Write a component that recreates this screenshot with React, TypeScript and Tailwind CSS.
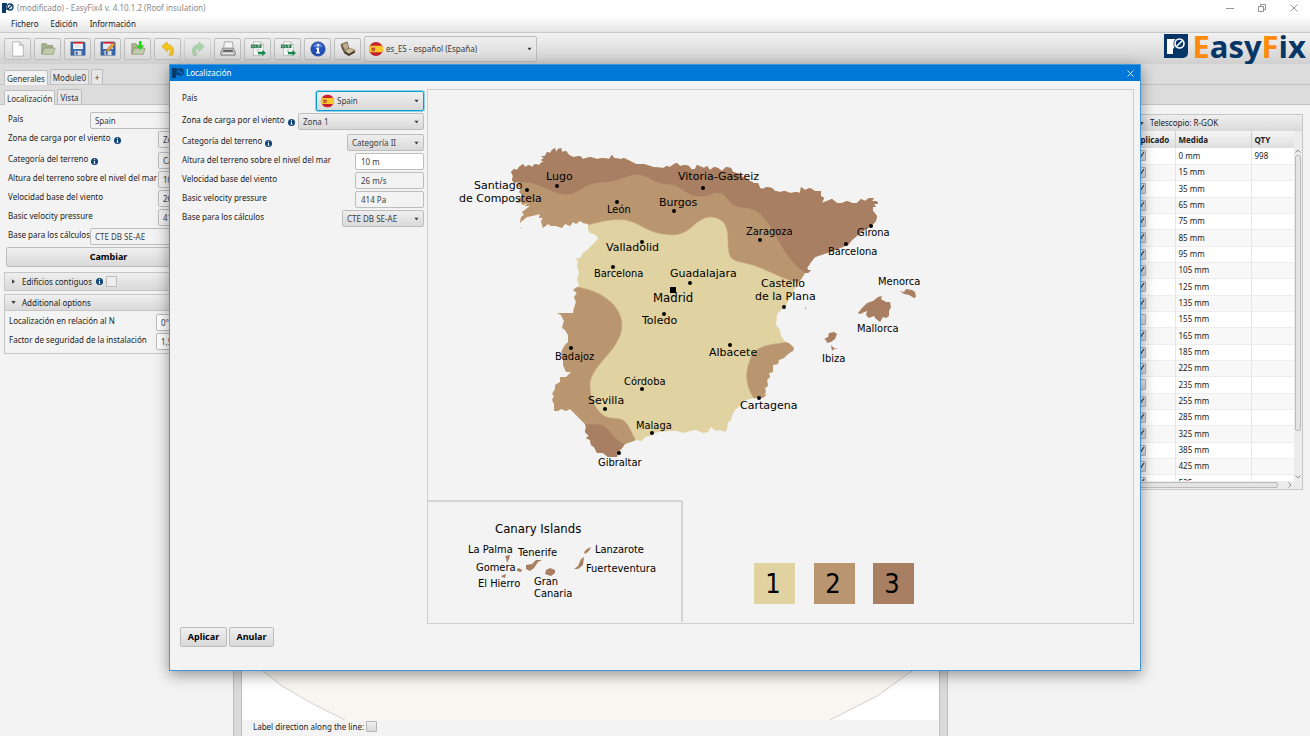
import type { ReactNode } from "react";
import clsx from "clsx";

const control = "rounded-[2px] border border-[#bdbdbd] text-[8px] text-[#3c3c3c]";
const raised = "bg-linear-to-b from-[#efefef] to-[#d9d9d9]";

const coast =
  "M511 172L514 169 517 170 519 167 523 164 525 167 529 165 532 167 535 164 539 165 542 162 545 163 541 160 544 158 541 156 545 156 547 152 550 153 552 150 555 148 556 152 558 149 561 148 562 152 566 151 569 155 573 157 580 156 583 159 590 157 597 159 603 158 609 159 612 155 614 158 621 159 624 158 630 161 636 164 644 164 653 167 663 168 667 166 670 167 674 164 677 163 680 166 685 165 689 166 691 169 695 169 697 165 704 168 707 166 710 170 714 167 718 168 722 171 726 167 731 168 733 172 740 174 743 177 750 181 754 183 758 183 760 188 762 189 767 187 772 188 775 191 780 192 785 191 790 193 797 192 800 193 801 187 805 190 810 188 815 191 821 191 821 196 824 198 822 203 827 201 832 199 837 203 842 203 847 201 852 203 857 203 861 199 865 201 869 198 874 198 872 201 877 201 878 204 874 204 876 207 873 207 873 211 877 216 876 221 871 226 865 230 858 235 852 240 848 245 840 248 833 251 824 254 815 257 811 262 807 268 808 270 811 270 808 273 805 273 802 278 797 285 791 297 785 307 779 312 777 315 776 325 780 330 781 336 785 341 790 344 794 348 793 351 788 354 784 358 779 360 778 364 773 365 773 372 769 373 770 377 767 380 768 386 765 388 766 392 764 395 767 394 763 398 756 398 750 399 744 401 740 406 735 410 732 416 731 421 728 422 727 429 725 432 720 430 716 431 711 427 708 432 703 433 696 430 690 431 683 433 677 431 669 431 660 432 653 433 650 436 645 437 642 441 636 440 631 442 625 444 622 448 618 452 617 457 608 457 603 453 597 453 594 447 591 445 590 440 586 438 589 436 585 432 586 427 585 424 576 415 570 409 566 411 561 409 558 411 554 411 554 404 552 400 554 396 552 394 555 389 555 385 560 382 560 377 566 377 569 374 571 372 566 372 563 365 563 360 561 356 562 350 565 345 568 342 568 335 565 330 562 328 564 321 561 315 557 313 566 313 573 313 574 308 576 302 574 297 577 293 573 290 577 287 579 286 577 279 579 273 577 266 578 262 576 259 581 257 582 254 587 250 592 245 598 239 596 235 590 233 588 230 588 224 583 223 580 221 576 224 573 222 570 226 565 224 562 228 556 226 551 226 548 224 543 228 541 221 543 218 539 218 540 214 536 215 532 216 527 217 522 221 520 223 521 217 524 215 522 212 530 206 524 206 529 203 522 205 521 202 517 203 519 198 523 196 519 192 521 188 517 186 519 182 514 183 512 180 513 176Z";

type CityLabel = { name: string; x: number; y: number; wide?: boolean; dot?: [number, number] };

const cities: CityLabel[] = [
  { name: "Lugo", x: 546, y: 180, wide: true, dot: [557, 186] },
  { name: "Santiago", x: 474, y: 189, wide: true, dot: [527, 190] },
  { name: "de Compostela", x: 459, y: 202, wide: true },
  { name: "León", x: 607, y: 213, dot: [617, 202] },
  { name: "Burgos", x: 659, y: 206, wide: true, dot: [674, 211] },
  { name: "Vitoria-Gasteiz", x: 678, y: 180, wide: true, dot: [703, 188] },
  { name: "Zaragoza", x: 746, y: 235, dot: [760, 240] },
  { name: "Girona", x: 857, y: 236, dot: [871, 226] },
  { name: "Barcelona", x: 828, y: 255, dot: [846, 244] },
  { name: "Valladolid", x: 606, y: 251, wide: true, dot: [642, 242] },
  { name: "Barcelona", x: 594, y: 277, dot: [613, 267] },
  { name: "Guadalajara", x: 670, y: 277, wide: true, dot: [690, 283] },
  { name: "Castello", x: 761, y: 287, wide: true, dot: [784, 307] },
  { name: "de la Plana", x: 755, y: 300, wide: true },
  { name: "Menorca", x: 878, y: 285 },
  { name: "Mallorca", x: 857, y: 332 },
  { name: "Ibiza", x: 822, y: 362 },
  { name: "Toledo", x: 642, y: 324, wide: true, dot: [664, 314] },
  { name: "Albacete", x: 709, y: 356, wide: true, dot: [730, 345] },
  { name: "Badajoz", x: 555, y: 360, dot: [571, 348] },
  { name: "Córdoba", x: 624, y: 385, dot: [642, 389] },
  { name: "Sevilla", x: 588, y: 404, wide: true, dot: [605, 409] },
  { name: "Cartagena", x: 740, y: 409, wide: true, dot: [759, 398] },
  { name: "Malaga", x: 636, y: 429, dot: [652, 433] },
  { name: "Gibraltar", x: 598, y: 466, dot: [619, 453] },
  { name: "La Palma", x: 468, y: 553 },
  { name: "Tenerife", x: 518, y: 556 },
  { name: "Gomera", x: 476, y: 571 },
  { name: "El Hierro", x: 478, y: 587 },
  { name: "Gran", x: 534, y: 585 },
  { name: "Canaria", x: 534, y: 597 },
  { name: "Lanzarote", x: 595, y: 553 },
  { name: "Fuerteventura", x: 586, y: 572 },
];

const legend = [
  { zone: "1", x: 754, fill: "#e1d2a1" },
  { zone: "2", x: 814, fill: "#ba9670" },
  { zone: "3", x: 873, fill: "#a87f62" },
];

const sizes = [0, 15, 35, 65, 75, 85, 95, 105, 125, 135, 155, 165, 185, 225, 235, 255, 285, 325, 385, 425, 525];
const notApplied = [155, 235];

function BrandMark({ className }: { className?: string }) {
  return (
    <svg viewBox="0 0 12 10" className={className} aria-hidden="true">
      <path d="M0 0h5v1.600a4 4 0 0 0 0 4.800L4 7v3H0z" fill="#0b3a69" />
      <circle cx="8" cy="4" r="3" fill="none" stroke="#0b3a69" strokeWidth="1.300" />
      <path d="M6 6l4-4" stroke="#0b3a69" strokeWidth="1.200" />
    </svg>
  );
}

function SpanishFlag({ className }: { className?: string }) {
  return (
    <svg viewBox="0 0 14 14" className={className} aria-hidden="true">
      <circle cx="7" cy="7" r="7" fill="#c8202f" />
      <path d="M.9 3.700h12.200a7 7 0 0 1 0 6.600H.9a7 7 0 0 1 0-6.600z" fill="#ffc928" />
      <path d="M2.500 5.500h3.600v2.200a1.800 1.800 0 0 1-3.600 0z" fill="#b8442f" />
      <path d="M3.300 4.800h2v1h-2zM4 7h1v1.500H4z" fill="#e9a27c" />
    </svg>
  );
}

function InfoDot({ className }: { className?: string }) {
  return (
    <svg viewBox="0 0 8 8" className={clsx("size-[7px] shrink-0", className)} aria-hidden="true">
      <circle cx="4" cy="4" r="4" fill="#0e427a" />
      <path d="M3.400 1.200h1.200v1H3.400zM3 3h1.600v2.800H5v.7H3v-.7h.4V3.700H3z" fill="#fff" />
    </svg>
  );
}

function Arrow({ className }: { className?: string }) {
  return (
    <svg viewBox="0 0 6 4" className={clsx("h-[3px] w-[5px]", className)} aria-hidden="true">
      <path d="M0 0h6L3 4z" fill="#3f3f3f" />
    </svg>
  );
}

function Combo({ id, value, className, flag, focused }: { id: string; value: string; className: string; flag?: boolean; focused?: boolean }) {
  return (
    <div className={clsx("relative", className)}>
      <select
        id={id}
        className={clsx(
          "block size-full appearance-none rounded-[2px] border text-[8px] text-[#3c3c3c]",
          raised,
          flag ? "pl-[20px]" : "pl-1",
          focused ? "border-[#039ed3] ring-1 ring-[#039ed3]/40" : "border-[#bdbdbd]",
        )}
      >
        <option>{value}</option>
      </select>
      {flag && <SpanishFlag className="pointer-events-none absolute top-1/2 left-[5px] size-[13px] -translate-y-1/2" />}
      <Arrow className="pointer-events-none absolute top-1/2 right-[5px] -translate-y-1/2" />
    </div>
  );
}

function Row({ id, label, info, className, children }: { id: string; label: string; info?: boolean; className?: string; children: ReactNode }) {
  return (
    <div className={clsx("flex items-start", className)}>
      <label htmlFor={id} className="text-[8px] leading-[14px] whitespace-nowrap">
        {label}
      </label>
      {info && <InfoDot className="mt-1.5 ml-[3px]" />}
      <div className="ml-auto">{children}</div>
    </div>
  );
}

const floppy = (
  <>
    <path d="M1 1h15l1 1v14H1z" fill="#3868a8" stroke="#264b80" strokeWidth=".6" />
    <path d="M3.500 1h11v8h-11z" fill="#f6f8fb" />
    <path d="M3.500 1h11v2h-11z" fill="#d9232b" />
    <path d="M5 5h8M5 7h8" stroke="#c3ccd8" strokeWidth=".7" />
    <path d="M5 11h8v5H5z" fill="#d7dbe0" />
    <path d="M6.500 12h2v3.500h-2z" fill="#2f558a" />
  </>
);

const folder = (
  <>
    <path d="M2 3h5l1 2h6v3H5L2 14z" fill="#a8b48c" stroke="#84906a" strokeWidth=".8" />
    <path d="M5 8h12l-2 7H2z" fill="#c3cbae" stroke="#8b9674" strokeWidth=".8" />
  </>
);

const sheet = (
  <>
    <path d="M4 1h8l3 3v12H4z" fill="#fff" stroke="#9aa49c" strokeWidth=".7" />
    <path d="M12 1v3h3" fill="none" stroke="#9aa49c" strokeWidth=".7" />
    <path d="M1 4h12v4H1z" fill="#2b7a50" />
    <path d="M2.500 5l1.500 2m0-2L2.500 7M6 5v2h1.500M10.500 5H9v1h1.500v1H9" fill="none" stroke="#e5f2ea" strokeWidth=".6" />
    <path d="M6 10h6M6 12h4M9 9v5" stroke="#aeb8b0" strokeWidth=".6" />
    <path d="M9 12h5v-2l4 3.500-4 3.500v-2H9z" fill="#18884a" />
  </>
);

const tools: { name: string; faded?: boolean; art: ReactNode }[] = [
  { name: "Nuevo", art: <path d="M3 1h8l4 4v12H3zM11 1v4h4" fill="#fdfdfd" stroke="#a3a3a3" strokeWidth=".8" /> },
  { name: "Abrir", art: folder },
  { name: "Guardar", art: floppy },
  {
    name: "Guardar como",
    art: (
      <>
        {floppy}
        <path d="M7 12l1.200-3.200L15 2l2 2-6.800 6.800z" fill="#f2a33a" stroke="#80521d" strokeWidth=".6" />
      </>
    ),
  },
  {
    name: "Importar",
    art: (
      <>
        {folder}
        <path d="M10 0h3v5h3l-4.500 5L7 5h3z" fill="#28d51c" />
      </>
    ),
  },
  { name: "Deshacer", art: <path d="M2 6l6-5v3c6 0 9 5 6 12-2 1-3 0-4-1 3-3 2-6-2-6v3z" fill="#f3c51d" stroke="#cf9d12" strokeWidth=".7" /> },
  { name: "Rehacer", faded: true, art: <path d="M16 6l-6-5v3C4 4 1 9 4 16c2 1 3 0 4-1-3-3-2-6 2-6v3z" fill="#74c474" stroke="#4fa653" strokeWidth=".7" /> },
  {
    name: "Imprimir",
    art: (
      <>
        <path d="M5 1h9l1 8H4z" fill="#f5f5f5" stroke="#8d8d8d" strokeWidth=".8" />
        <path d="M3 8h12l2 4v4H1v-4z" fill="#c2c2c2" stroke="#6f6f6f" strokeWidth=".8" />
        <path d="M4 10h10l1 2H3z" fill="#595959" />
        <path d="M3 14h12" stroke="#f3f3f3" />
      </>
    ),
  },
  { name: "Exportar XLSX", art: sheet },
  { name: "Exportar lista", art: sheet },
  {
    name: "Acerca de",
    art: (
      <>
        <circle cx="9" cy="9" r="8" fill="#2350ba" stroke="#173a8c" strokeWidth=".8" />
        <path d="M3.500 6a6 6 0 0 1 11 0c-3 2-8 2-11 0z" fill="#5c84da" />
        <circle cx="9.200" cy="4.800" r="1.300" fill="#fff" />
        <path d="M7 7.500h3.200v5H11V14H7v-1.500h.8V9H7z" fill="#fff" />
      </>
    ),
  },
  {
    name: "Manual",
    art: (
      <>
        <path d="M1 4l7-3 2 8-5 3z" fill="#8f7b5d" stroke="#4b3e2b" strokeWidth=".7" />
        <path d="M3 4l5-2 1.500 6.500L6 10z" fill="#c0ad8d" />
        <path d="M5 12l6-3 6 2v2l-7 4-5-3z" fill="#433726" />
        <path d="M5 11l6-3 6 2.500-7 4z" fill="#cdbb9b" stroke="#6c5a3f" strokeWidth=".6" />
        <path d="M1 4l4 8v2L2 8z" fill="#33291b" />
      </>
    ),
  },
];

function Toolbar() {
  return (
    <div className="flex h-8 shrink-0 items-center border-t border-[#c9c9c9] bg-linear-to-b from-[#f2f2f2] to-[#d0d0d0] pl-1">
      <div className="flex gap-[3px]">
        {tools.map((tool) => (
          <button
            key={tool.name}
            type="button"
            aria-label={tool.name}
            className={clsx("grid h-[22px] w-[27px] place-items-center rounded-[2px] border border-[#bdbdbd]", raised, tool.faded && "opacity-50")}
          >
            <svg viewBox="0 0 18 18" className="size-4">
              {tool.art}
            </svg>
          </button>
        ))}
      </div>
      <div className="relative ml-[3px] h-[26px] w-[173px]">
        <select aria-label="Idioma" className={clsx("block size-full appearance-none pl-[21px]", control, raised)}>
          <option>es_ES - español (España)</option>
        </select>
        <SpanishFlag className="pointer-events-none absolute top-1/2 left-[5px] size-[14px] -translate-y-1/2" />
        <Arrow className="pointer-events-none absolute top-1/2 right-[5px] -translate-y-1/2" />
      </div>
      <div className="mr-1 ml-auto flex h-full items-start gap-1 pt-px">
        <svg viewBox="0 0 24 24" className="size-6" aria-hidden="true">
          <path d="M0 0h24v19a5 5 0 0 1-5 5H0z" fill="#073566" />
          <path d="M3 5h8.500a6 6 0 0 0-1 8L9 15v5H3z" fill="#fff" />
          <circle cx="15.500" cy="9.500" r="4.500" fill="none" stroke="#fff" strokeWidth="1.600" />
          <path d="M12.500 12.500l6-6" stroke="#fff" strokeWidth="1.600" />
        </svg>
        <span className="font-['Open_Sans',sans-serif] text-[31px] leading-6 font-bold text-[#073566]">
          <span className="text-[#ff8a0c]">E</span>asy<span className="text-[#ff8a0c]">F</span>ix
        </span>
      </div>
    </div>
  );
}

function Tabs({ items, label }: { items: string[]; label: string }) {
  return (
    <div role="tablist" aria-label={label} className="flex shrink-0 items-end gap-[2px] border-b border-[#c2c2c2] bg-[#dcdcdc] pl-1">
      {items.map((item, i) => (
        <button
          key={item}
          type="button"
          role="tab"
          aria-selected={i === 0}
          className={clsx(
            "h-[15px] rounded-t-[2px] border border-b-0 border-[#bdbdbd] px-[2px] text-[8px] leading-[13px] text-[#333]",
            i === 0 ? "-mb-px bg-[#f3f3f3]" : "bg-[#e6e6e6]",
            item === "+" && "w-3",
          )}
        >
          {item}
        </button>
      ))}
    </div>
  );
}

const sideFields = [
  { id: "side-country", label: "País", value: "Spain", long: true },
  { id: "side-zone", label: "Zona de carga por el viento", value: "Zona 1", info: true },
  { id: "side-terrain", label: "Categoría del terreno", value: "Categoría II", info: true },
  { id: "side-height", label: "Altura del terreno sobre el nivel del mar", value: "10 m" },
  { id: "side-speed", label: "Velocidad base del viento", value: "26 m/s" },
  { id: "side-pressure", label: "Basic velocity pressure", value: "414 Pa" },
  { id: "side-basis", label: "Base para los cálculos", value: "CTE DB SE-AE", long: true },
];

function Sidebar() {
  return (
    <aside className="w-[233px] shrink-0 pt-[7px] pr-[18px] pl-1">
      <div className="grid gap-[2px] px-1">
        {sideFields.map((f) => (
          <Row key={f.id} id={f.id} label={f.label} info={f.info} className={f.id === "side-zone" ? "h-[19px]" : "h-[17px]"}>
            <input
              id={f.id}
              readOnly
              defaultValue={f.value}
              className={clsx("block h-[17px] bg-[#f3f3f3] px-1", control, f.long ? "w-[122px]" : "w-[54px]")}
            />
          </Row>
        ))}
      </div>
      <button type="button" className={clsx("mx-[2px] mt-[2px] block h-5 w-[205px] rounded-[2px] border border-[#bdbdbd] text-[9px] font-bold text-black", raised)}>
        Cambiar
      </button>
      <div className={clsx("mt-[5px] flex h-[19px] items-center border border-[#c6c6c6] px-1.5 text-[8px]", raised)}>
        <Arrow className="-rotate-90" />
        <label htmlFor="adjacent" className="ml-1.5">
          Edificios contiguos
        </label>
        <InfoDot className="ml-1" />
        <input id="adjacent" type="checkbox" className="ml-[3px] size-[11px] appearance-none border border-[#bdbdbd] bg-[#eee]" />
      </div>
      <section className="mt-[3px] border border-[#c6c6c6]">
        <h2 className={clsx("flex h-4 items-center gap-1.5 border-b border-[#c6c6c6] px-1.5 text-[8px]", raised)}>
          <Arrow />
          Additional options
        </h2>
        <div className="grid gap-[2px] px-1 py-[3px]">
          <Row id="side-north" label="Localización en relación al N" className="h-[17px]">
            <input id="side-north" defaultValue="0°" className={clsx("block h-[17px] w-[54px] bg-white px-1", control)} />
          </Row>
          <Row id="side-factor" label="Factor de seguridad de la instalación" className="h-[17px]">
            <input id="side-factor" defaultValue="1,5" className={clsx("block h-[17px] w-[54px] bg-white px-1", control)} />
          </Row>
        </div>
      </section>
    </aside>
  );
}

function Sash() {
  return <div className="w-[9px] shrink-0 border-x border-[#bebebe] bg-[#d9d9d9]" />;
}

function RoofView() {
  return (
    <div className="flex min-w-0 flex-1 flex-col">
      <div className="min-h-0 flex-1 bg-white">
        <svg viewBox="242 105 697 615" preserveAspectRatio="none" className="size-full">
          <path d="M242 640L263 671 282 686 313 704 345 720H830L877 696 912 671 939 640V400H242Z" fill="#f9f5f0" />
          <path d="M242 640L263 671 282 686 313 704 345 720M830 720L877 696 912 671 939 640" fill="none" stroke="#d2cfcb" />
        </svg>
      </div>
      <div className="flex h-4 shrink-0 items-start gap-[2px] pt-px pl-[11px] text-[8px] leading-3">
        <label htmlFor="label-direction">Label direction along the line:</label>
        <input id="label-direction" type="checkbox" className={clsx("size-[11px] appearance-none rounded-[1px] border border-[#b5b5b5]", raised)} />
      </div>
    </div>
  );
}

function TelescopePanel() {
  return (
    <aside className="flex w-[362px] shrink-0 justify-end pt-[9px] pr-[7px]">
      <section className="flex h-[376px] w-[173px] flex-col border border-[#c6c6c6] text-[8px]">
        <h2 className={clsx("flex h-4 shrink-0 items-center gap-1.5 px-2", raised)}>
          <Arrow />
          Telescopio: R-GOK
        </h2>
        <div className="flex min-h-0 flex-1">
          <div className="min-w-0 flex-1 overflow-hidden">
            <table className="w-full table-fixed border-collapse text-left">
              <thead>
                <tr className="h-[17px] bg-linear-to-b from-[#f5f5f5] to-[#dedede]">
                  <th className="w-[44px] border-r border-[#cfcfcf] p-0 pl-1">Aplicado</th>
                  <th className="w-[76px] border-r border-[#cfcfcf] p-0 pl-[3px]">Medida</th>
                  <th className="p-0 pl-[3px]">QTY</th>
                </tr>
              </thead>
              <tbody>
                {sizes.map((size, i) => (
                  <tr key={size} className="h-4 border-b border-[#ededed] bg-white even:bg-[#f8f8f8] nth-[3n]:h-[17px]">
                    <td className="border-r border-[#e6e6e6] p-0 pl-1">
                      <label className="relative block size-[11px]">
                        <input
                          type="checkbox"
                          aria-label={`Aplicado ${size} mm`}
                          defaultChecked={!notApplied.includes(size)}
                          className={clsx("peer block size-full appearance-none rounded-[1px] border border-[#b5b5b5]", raised)}
                        />
                        <svg viewBox="0 0 11 11" className="pointer-events-none absolute inset-0 hidden size-full peer-checked:block" aria-hidden="true">
                          <path d="M2.500 5.500l2 3 4.500-6.500" fill="none" stroke="#444" strokeWidth="1.300" />
                        </svg>
                      </label>
                    </td>
                    <td className="border-r border-[#e6e6e6] p-0 pl-[3px] leading-[12px]">{size} mm</td>
                    <td className="p-0 pl-[3px] leading-[12px]">{i === 0 ? "998" : ""}</td>
                  </tr>
                ))}
              </tbody>
            </table>
          </div>
          <div className="flex w-2 shrink-0 flex-col items-center bg-[#ececec] pt-[18px]">
            <svg viewBox="0 0 6 4" className="h-1 w-1.5">
              <path d="M.5 3.500L3 1l2.500 2.500" fill="none" stroke="#666" strokeWidth=".7" />
            </svg>
            <div className="mt-[2px] h-[276px] w-1.5 rounded-[2px] border border-[#bbb] bg-[#e4e4e4]" />
            <svg viewBox="0 0 6 4" className="mt-auto mb-[2px] h-1 w-1.5">
              <path d="M.5 .5L3 3 5.500 .5" fill="none" stroke="#666" strokeWidth=".7" />
            </svg>
          </div>
        </div>
        <div className="flex h-2 shrink-0 items-center bg-[#ececec] pr-2.5">
          <div className="mr-2.5 h-1.5 flex-1 rounded-[2px] border border-[#bbb] bg-[#e4e4e4]" />
          <svg viewBox="0 0 4 6" className="h-1.5 w-1">
            <path d="M.5 .5L3 3 .5 5.500" fill="none" stroke="#666" strokeWidth=".7" />
          </svg>
        </div>
      </section>
    </aside>
  );
}

function WindMap() {
  return (
    <svg viewBox="428 90 705 532" preserveAspectRatio="xMinYMin meet" className="size-full" role="img" aria-label="Zonas de carga por el viento">
      <defs>
        <clipPath id="mainland">
          <path d={coast} />
        </clipPath>
      </defs>
      <g clipPath="url(#mainland)">
        <path d="M500 140H890V470H500Z" fill="#e1d2a1" />
        <g fill="#ba9670" stroke="#cdb18d" strokeWidth=".6">
          <path d="M500 140V240H570L588 225C600 222 610 219 625 220C642 223 646 234 672 235C692 235 693 219 710 217C727 218 728 230 728 243C728 268 738 257 765 270C778 275 788 282 801 282H890V140Z" />
          <path d="M540 287H577C600 290 622 305 622 325C622 350 590 365 590 385C590 402 600 418 612 418C627 419 626 421 636 441V470H540Z" />
          <path d="M800 341C770 344 753 345 750 360C743 377 748 390 755 400L800 410Z" />
        </g>
        <g fill="#a87f62" stroke="#c09c79" strokeWidth=".6">
          <path d="M500 182L530 183C545 187 555 195 567 195C580 194 583 184 600 183C620 182 625 176 637 175C650 176 652 184 670 185C682 186 686 197 700 197C710 197 714 191 722 194C730 200 730 207 742 208C762 208 769 225 778 241C790 262 798 268 806 274L830 280H900V130H500Z" />
          <path d="M570 424H598C610 425 610 437 625 444L620 470H570Z" />
        </g>
      </g>
      <g fill="#a87f62">
        <path d="M858 313L862 308 867 303 873 301 878 297 882 296 881 299 886 302 890 302 891 307 889 311 889 316 886 318 883 317 880 322 876 319 874 316 869 318 866 315 867 311 860 314Z" />
        <path d="M900 291L904 292 906 289 912 290 915 292 916 297 914 298 909 295 904 294Z" />
        <path d="M824 339L828 337 829 333 834 332 837 334 835 339 831 342 827 343 826 340Z" />
        <path d="M831 345L834 348 838 348 834 349 832 351Z" />
        <path d="M805 307l1 1-1 2M521 227v2" stroke="#d9b79d" strokeWidth=".8" />
        <path d="M505 556l5-1-1 4-2 4-1-5zM517 569l2-1 3 2-1 2-4-1zM501 576l5-2-1 4-3-1zM526 565l6-1 4-4 6 0-4 2-4 6-4 3-4-2zM546 570l4-2 5 2v3l-4 3-6-2zM584 552l3-3 4-2-2 4-4 3zM574 569l4-3 3-7 3-2-1 8-5 4z" />
      </g>
      <path d="M428 501H682V622" fill="none" stroke="#b3b3b3" />
      <path d="M670 287h6v6h-6z" />
      {cities.map((city) => (
        <g key={`${city.name}-${city.y}`} fontSize="11">
          {city.dot && <circle cx={city.dot[0]} cy={city.dot[1]} r="2" />}
          <text x={city.x} y={city.y} className={city.wide ? "font-['DejaVu_Sans',sans-serif]" : "font-['DejaVu_Sans_Condensed','DejaVu_Sans',sans-serif]"}>
            {city.name}
          </text>
        </g>
      ))}
      <g fontSize="13" className="font-['DejaVu_Sans_Condensed','DejaVu_Sans',sans-serif]">
        <text x="653" y="302">Madrid</text>
        <text x="495" y="533">Canary Islands</text>
      </g>
      {legend.map((item) => (
        <g key={item.zone}>
          <rect x={item.x} y="563" width="41" height="41" fill={item.fill} />
          <text x={item.x + 19} y="593" fontSize="27" textAnchor="middle" className="font-['DejaVu_Sans_Condensed','DejaVu_Sans',sans-serif]">
            {item.zone}
          </text>
        </g>
      ))}
    </svg>
  );
}

function LocationDialog() {
  const readout = clsx("block h-[17px] w-[69px] px-[5px]", control);

  return (
    <div
      role="dialog"
      aria-label="Localización"
      className="absolute inset-x-[169px] top-16 bottom-[65px] flex flex-col border border-[#3f97d9] bg-[#f3f3f3] shadow-[0_4px_14px_rgba(0,0,0,0.4)]"
    >
      <header className="flex h-4 shrink-0 items-center bg-[#0078d7] pr-1.5 pl-[2px] text-[8px] text-white">
        <BrandMark className="h-2.5 w-3" />
        <h1 className="ml-[2px]">Localización</h1>
        <button type="button" aria-label="Cerrar" className="ml-auto">
          <svg viewBox="0 0 8 8" className="size-[7px]">
            <path d="M.5 .5l7 7m0-7l-7 7" stroke="#fff" strokeWidth=".9" />
          </svg>
        </button>
      </header>
      <div className="flex min-h-0 flex-1 gap-[3px] pt-2 pr-1.5 pl-3">
        <form className="grid w-[242px] shrink-0 content-start gap-[2px] pt-[2px]">
          <Row id="country" label="País" className="h-5">
            <Combo id="country" value="Spain" flag focused className="h-5 w-[108px]" />
          </Row>
          <Row id="zone" label="Zona de carga por el viento" info className="h-[19px]">
            <Combo id="zone" value="Zona 1" className="h-[17px] w-[126px]" />
          </Row>
          <Row id="terrain" label="Categoría del terreno" info className="h-[17px]">
            <Combo id="terrain" value="Categoría II" className="h-[17px] w-[77px]" />
          </Row>
          <Row id="height" label="Altura del terreno sobre el nivel del mar" className="h-[17px]">
            <input id="height" defaultValue="10 m" className={clsx(readout, "bg-white")} />
          </Row>
          <Row id="speed" label="Velocidad base del viento" className="h-[17px]">
            <input id="speed" readOnly defaultValue="26 m/s" className={clsx(readout, "bg-[#f3f3f3]")} />
          </Row>
          <Row id="pressure" label="Basic velocity pressure" className="h-[17px]">
            <input id="pressure" readOnly defaultValue="414 Pa" className={clsx(readout, "bg-[#f3f3f3]")} />
          </Row>
          <Row id="basis" label="Base para los cálculos" className="h-[17px]">
            <Combo id="basis" value="CTE DB SE-AE" className="h-[17px] w-[82px]" />
          </Row>
        </form>
        <div className="min-w-0 flex-1 border border-[#cfcfcf]">
          <WindMap />
        </div>
      </div>
      <footer className="flex h-[46px] shrink-0 gap-[2px] pt-[3px] pl-2.5 text-[9px] font-bold text-black">
        <button type="submit" className={clsx("h-5 w-[47px] rounded-[2px] border border-[#bdbdbd]", raised)}>
          Aplicar
        </button>
        <button type="button" className={clsx("h-5 w-[45px] rounded-[2px] border border-[#bdbdbd]", raised)}>
          Anular
        </button>
      </footer>
    </div>
  );
}

export default function App() {
  return (
    <div className="relative flex h-screen flex-col overflow-hidden bg-[#f3f3f3] font-['Noto_Sans',sans-serif] text-[#222]">
      <header className="flex h-4 shrink-0 items-center bg-white pr-3 pl-[2px] text-[#8a8a8a]">
        <BrandMark className="h-2.5 w-3" />
        <span className="ml-[3px] text-[8px]">(modificado) - EasyFix4 v. 4.10.1.2 (Roof insulation)</span>
        <div className="ml-auto flex gap-6">
          {["M0 4.500h8", "M.5 2.500h5v5h-5zM2.500 2.500v-2h5v5h-2", "M.5 .5l7 7m0-7l-7 7"].map((d, i) => (
            <button key={d} type="button" aria-label={["Minimizar", "Restaurar", "Cerrar ventana"][i]}>
              <svg viewBox="0 0 8 8" className="size-2">
                <path d={d} fill="none" stroke="#777" strokeWidth=".8" />
              </svg>
            </button>
          ))}
        </div>
      </header>
      <nav className="flex h-4 shrink-0 items-center gap-3 bg-linear-to-b from-white to-[#e6e6e6] pl-[11px] text-[8px]">
        <button type="button">Fichero</button>
        <button type="button">Edición</button>
        <button type="button">Información</button>
      </nav>
      <Toolbar />
      <div className="flex h-[21px] shrink-0 flex-col justify-end bg-[#dcdcdc]">
        <Tabs label="Módulos" items={["Generales", "Module0", "+"]} />
      </div>
      <div className="flex h-5 shrink-0 flex-col justify-end bg-[#dcdcdc]">
        <Tabs label="Secciones" items={["Localización", "Vista"]} />
      </div>
      <main className="flex min-h-0 flex-1">
        <Sidebar />
        <Sash />
        <RoofView />
        <Sash />
        <TelescopePanel />
      </main>
      <LocationDialog />
    </div>
  );
}
